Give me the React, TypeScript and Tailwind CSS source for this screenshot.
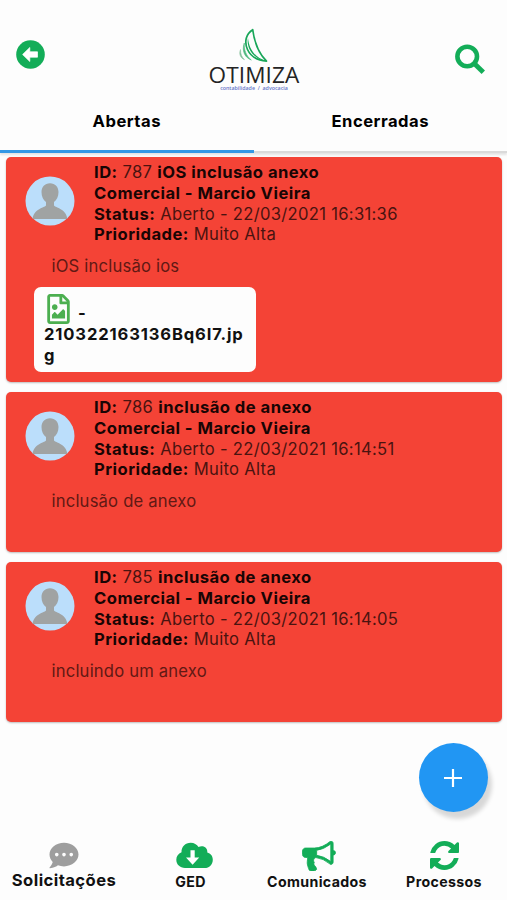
import React from "react";
import { FaCommentDots, FaRegFileImage } from "react-icons/fa";

type Ticket = { id: string; title: string; date: string; message: string; file?: string };

const tickets: Ticket[] = [
  { id: "787", title: "iOS inclusão anexo", date: "22/03/2021 16:31:36", message: "iOS inclusão ios", file: "210322163136Bq6I7.jpg" },
  { id: "786", title: "inclusão de anexo", date: "22/03/2021 16:14:51", message: "inclusão de anexo" },
  { id: "785", title: "inclusão de anexo", date: "22/03/2021 16:14:05", message: "incluindo um anexo" },
];

function BackIcon() {
  return (
    <svg className="h-[29px] w-[29px]" viewBox="0 0 29 29">
      <circle cx="14.5" cy="14.5" r="14.3" fill="#13ad58" />
      <path d="M6.600 14.500 13.800 7.500v4.300h7.700v5.400h-7.700v4.300z" fill="#fff" stroke="#fff" strokeWidth=".7" strokeLinejoin="round" />
    </svg>
  );
}

function SearchIcon() {
  return (
    <svg className="h-[30px] w-[30px]" viewBox="0 0 30 30" fill="none" stroke="#13ad58">
      <circle cx="12.200" cy="12.500" r="9.800" strokeWidth="4.600" />
      <path d="m18.500 18.700 9.800 9.600" strokeWidth="4.800" />
    </svg>
  );
}

function CloudIcon() {
  return (
    <svg className="h-[27px] w-[37px]" viewBox="0 0 37 27">
      <path d="M9 26C4 26 .3 22.500 .3 17.800c0-3.500 2-6.300 5.200-7.500C5.300 4.800 9.300.8 14.700.8c3.400 0 6.200 1.600 7.800 4.300 1-.6 2-.9 3.200-.9 3.500 0 6 2.700 5.600 6.200 3.300.8 5.500 3.700 5.500 7.300 0 4.700-3.500 8.300-8.200 8.300Z" fill="#13ad58" />
      <path d="M14.500 8.300h4.200v7.200h4.500l-6.600 7.200-6.600-7.200h4.500z" fill="#fff" />
    </svg>
  );
}

function BullhornIcon() {
  return (
    <svg className="h-[30px] w-[34px]" viewBox="0 128 1792 1632" fill="#13ad58" stroke="#13ad58" strokeWidth="45">
      <path d="M1664 640q53 0 90.500 37.500t37.500 90.500-37.500 90.500-90.500 37.500v384q0 52-38 90t-90 38q-417-347-812-380-58 19-91 66t-31 100.500 40 92.500q-20 33-23 65.500t6 58 33.500 55 48 50T768 1664q-29 58-111.500 83t-168.500 11.500-132-55.500q-7-23-29.500-87.500t-32-94.500-23-89-15-101 3.500-98.500T282 1024H160q-66 0-113-47T0 864V672q0-66 47-113t113-47h480q435 0 896-384 52 0 90 38t38 90v384zm-128 604V292q-394 302-768 343v270q377 42 768 339z" />
    </svg>
  );
}

function RefreshIcon() {
  return (
    <svg className="h-[29px] w-[29px]" viewBox="0 0 1536 1536" fill="#13ad58">
      <path d="M1511 928q0 5-1 7-64 268-268 434.500T764 1536q-146 0-282.500-55T238 1324l-129 129q-19 19-45 19t-45-19-19-45V960q0-26 19-45t45-19h448q26 0 45 19t19 45-19 45l-137 137q71 66 161 102t187 36q134 0 250-65t186-179q11-17 53-117 8-23 30-23h192q13 0 22.500 9.500t9.500 22.500zm25-800v448q0 26-19 45t-45 19h-448q-26 0-45-19t-19-45 19-45l138-138Q969 256 768 256q-134 0-250 65T332 500q-11 17-53 117-8 23-30 23H50q-13 0-22.500-9.500T18 608v-7q65-268 270-434.500T768 0q146 0 284 55.500T1297 212l130-129q19-19 45-19t45 19 19 45z" />
    </svg>
  );
}

function Logo() {
  return (
    <div className="flex w-[110px] flex-col items-center">
      <svg className="h-[35px] w-[34px]" viewBox="0 0 34 35" fill="none">
        <path d="M15.700 1.700C9 6 7 13.500 10.500 21.500c3 6.500 8.500 10.800 19 11.700C21.500 25 17.300 14 15.700 1.700Z" stroke="#18a659" strokeWidth="1.700" strokeLinejoin="round" />
        <path d="M11 10C9.500 17 13 27 24 32c2 .8 4 1 5.500 1C18 30 12 21 11 10z" fill="#18a659" />
        <path d="M7.300 15c-.5 7 2 13 7 17-6-2.200-10-8.500-7-17Z" fill="#4db77d" stroke="#4db77d" strokeWidth=".6" />
        <path d="M3.500 21.500c0 4.500 1.200 7.500 4 10.200-3.800-1.500-6-5.500-4-10.200Z" fill="#83bf9b" stroke="#83bf9b" strokeWidth=".5" />
      </svg>
      <div className="mt-px whitespace-nowrap font-['Open_Sans',sans-serif] text-[22.600px] leading-[22px] tracking-[0.100px] text-[#242424]">OTIMIZA</div>
      <div className="mt-[-1px] whitespace-pre font-['Open_Sans',sans-serif] text-[5.300px] font-semibold leading-[7px] text-[#6574c8]">contabilidade  /  advocacia</div>
    </div>
  );
}

function Avatar() {
  return (
    <svg className="h-[50px] w-[50px]" viewBox="0 0 50 50">
      <circle cx="25" cy="25" r="24.500" fill="#bbdefb" />
      <path d="M25 7.200c-5.200 0-8.500 3.600-8.500 8.800 0 4.500 1.800 8 4.500 10.100v3.200c0 2.200-12.600 3.200-13.300 13.700h34.600C41.600 32.500 29 31.500 29 29.300v-3.200c2.700-2.100 4.500-5.600 4.500-10.100 0-5.200-3.300-8.800-8.500-8.800Z" fill="#a0a3a3" />
    </svg>
  );
}

function Label({ children }: { children: React.ReactNode }) {
  return <b className="tracking-[0.470px] text-[#190504]">{children}</b>;
}

function Card({ ticket }: { ticket: Ticket }) {
  return (
    <article className={`rounded-[5px] bg-[#f44336] shadow-[0_1px_2px_rgba(0,0,0,0.25)] ${ticket.file ? "h-[225px]" : "h-[160px]"}`}>
      <div className="flex pt-[5px]">
        <div className="ml-[19px] pt-[14px]"><Avatar /></div>
        <div className="ml-[19px] whitespace-nowrap text-[16.600px] leading-[20.750px] tracking-[0.300px] text-[#4a1310]">
          <div><Label>ID:</Label> {ticket.id} <Label>{ticket.title}</Label></div>
          <div><Label>Comercial - Marcio Vieira</Label></div>
          <div><Label>Status:</Label> Aberto - {ticket.date}</div>
          <div><Label>Prioridade:</Label> Muito Alta</div>
        </div>
      </div>
      <p className="ml-[45.500px] mt-[11px] text-[16.600px] leading-[21px] tracking-[0.200px] text-[#611914]">{ticket.message}</p>
      {ticket.file && (
        <div className="ml-[28px] mt-[10px] h-[85px] w-[222px] rounded-[7px] bg-[#fdfdfd] px-[10px] pt-[7px] text-[16.600px] font-bold leading-[21px] tracking-[0.850px] text-[#111]">
          <div className="flex h-[30px] items-end">
            <FaRegFileImage className="ml-px h-[30px] w-[27px] text-[#4caf50]" />
            <span className="ml-[6px]">-</span>
          </div>
          <div className="break-all">{ticket.file}</div>
        </div>
      )}
    </article>
  );
}

export default function App() {
  return (
    <div className="relative flex h-[900px] w-[507px] flex-col overflow-hidden bg-[#fdfdfd] font-['Inter',sans-serif]">
      <header className="flex h-[100px] shrink-0 justify-between">
        <button className="ml-[16px] mt-[40px] h-[29px]"><BackIcon /></button>
        <div className="ml-[8px] mt-[28px]"><Logo /></div>
        <button className="mr-[22px] mt-[44px] h-[30px]"><SearchIcon /></button>
      </header>
      <nav className="grid h-[53px] shrink-0 grid-cols-2 border-b-[2px] border-[#dadada] text-[16.600px] font-bold tracking-[0.500px] shadow-[0_2px_2px_rgba(0,0,0,0.1)]">
        <button className="-mb-[2px] border-b-[3px] border-[#3498e5] pb-[7px]">Abertas</button>
        <button className="pb-[8px]">Encerradas</button>
      </nav>
      <main className="flex flex-1 flex-col gap-[10px] px-[5px] pl-[6px] pt-[4px]">
        {tickets.map((t) => <Card key={t.id} ticket={t} />)}
      </main>
      <button className="absolute left-[418.500px] top-[743px] flex h-[69px] w-[69px] items-center justify-center rounded-full bg-[#2196f3] shadow-[4px_7px_4px_rgba(0,0,0,0.15)]">
        <svg className="h-[18px] w-[18px]" viewBox="0 0 18 18"><path d="M9 0v18M0 9h18" stroke="#fff" strokeWidth="2.200" /></svg>
      </button>
      <footer className="grid h-[66px] shrink-0 grid-cols-[127px_127px_126px_127px] text-[14.200px] font-bold tracking-[0.350px] text-[#111]">
        <div className="flex flex-col items-center pl-px pt-[7px]"><FaCommentDots className="h-[29px] w-[30px] text-[#9e9e9e]" /><span className="text-[16.600px] leading-[20px] tracking-[0.430px]">Solicitações</span></div>
        <div className="ml-[7px] flex flex-col items-center pt-[8px]"><CloudIcon /><span className="mr-[7px] mt-[3px] leading-[20px]">GED</span></div>
        <div className="flex flex-col items-center pt-[7px]"><span className="ml-[4px] block h-[30px]"><BullhornIcon /></span><span className="mt-px leading-[20px]">Comunicados</span></div>
        <div className="flex flex-col items-center pl-px pt-[7px]"><RefreshIcon /><span className="mt-[2px] leading-[20px]">Processos</span></div>
      </footer>
    </div>
  );
}
